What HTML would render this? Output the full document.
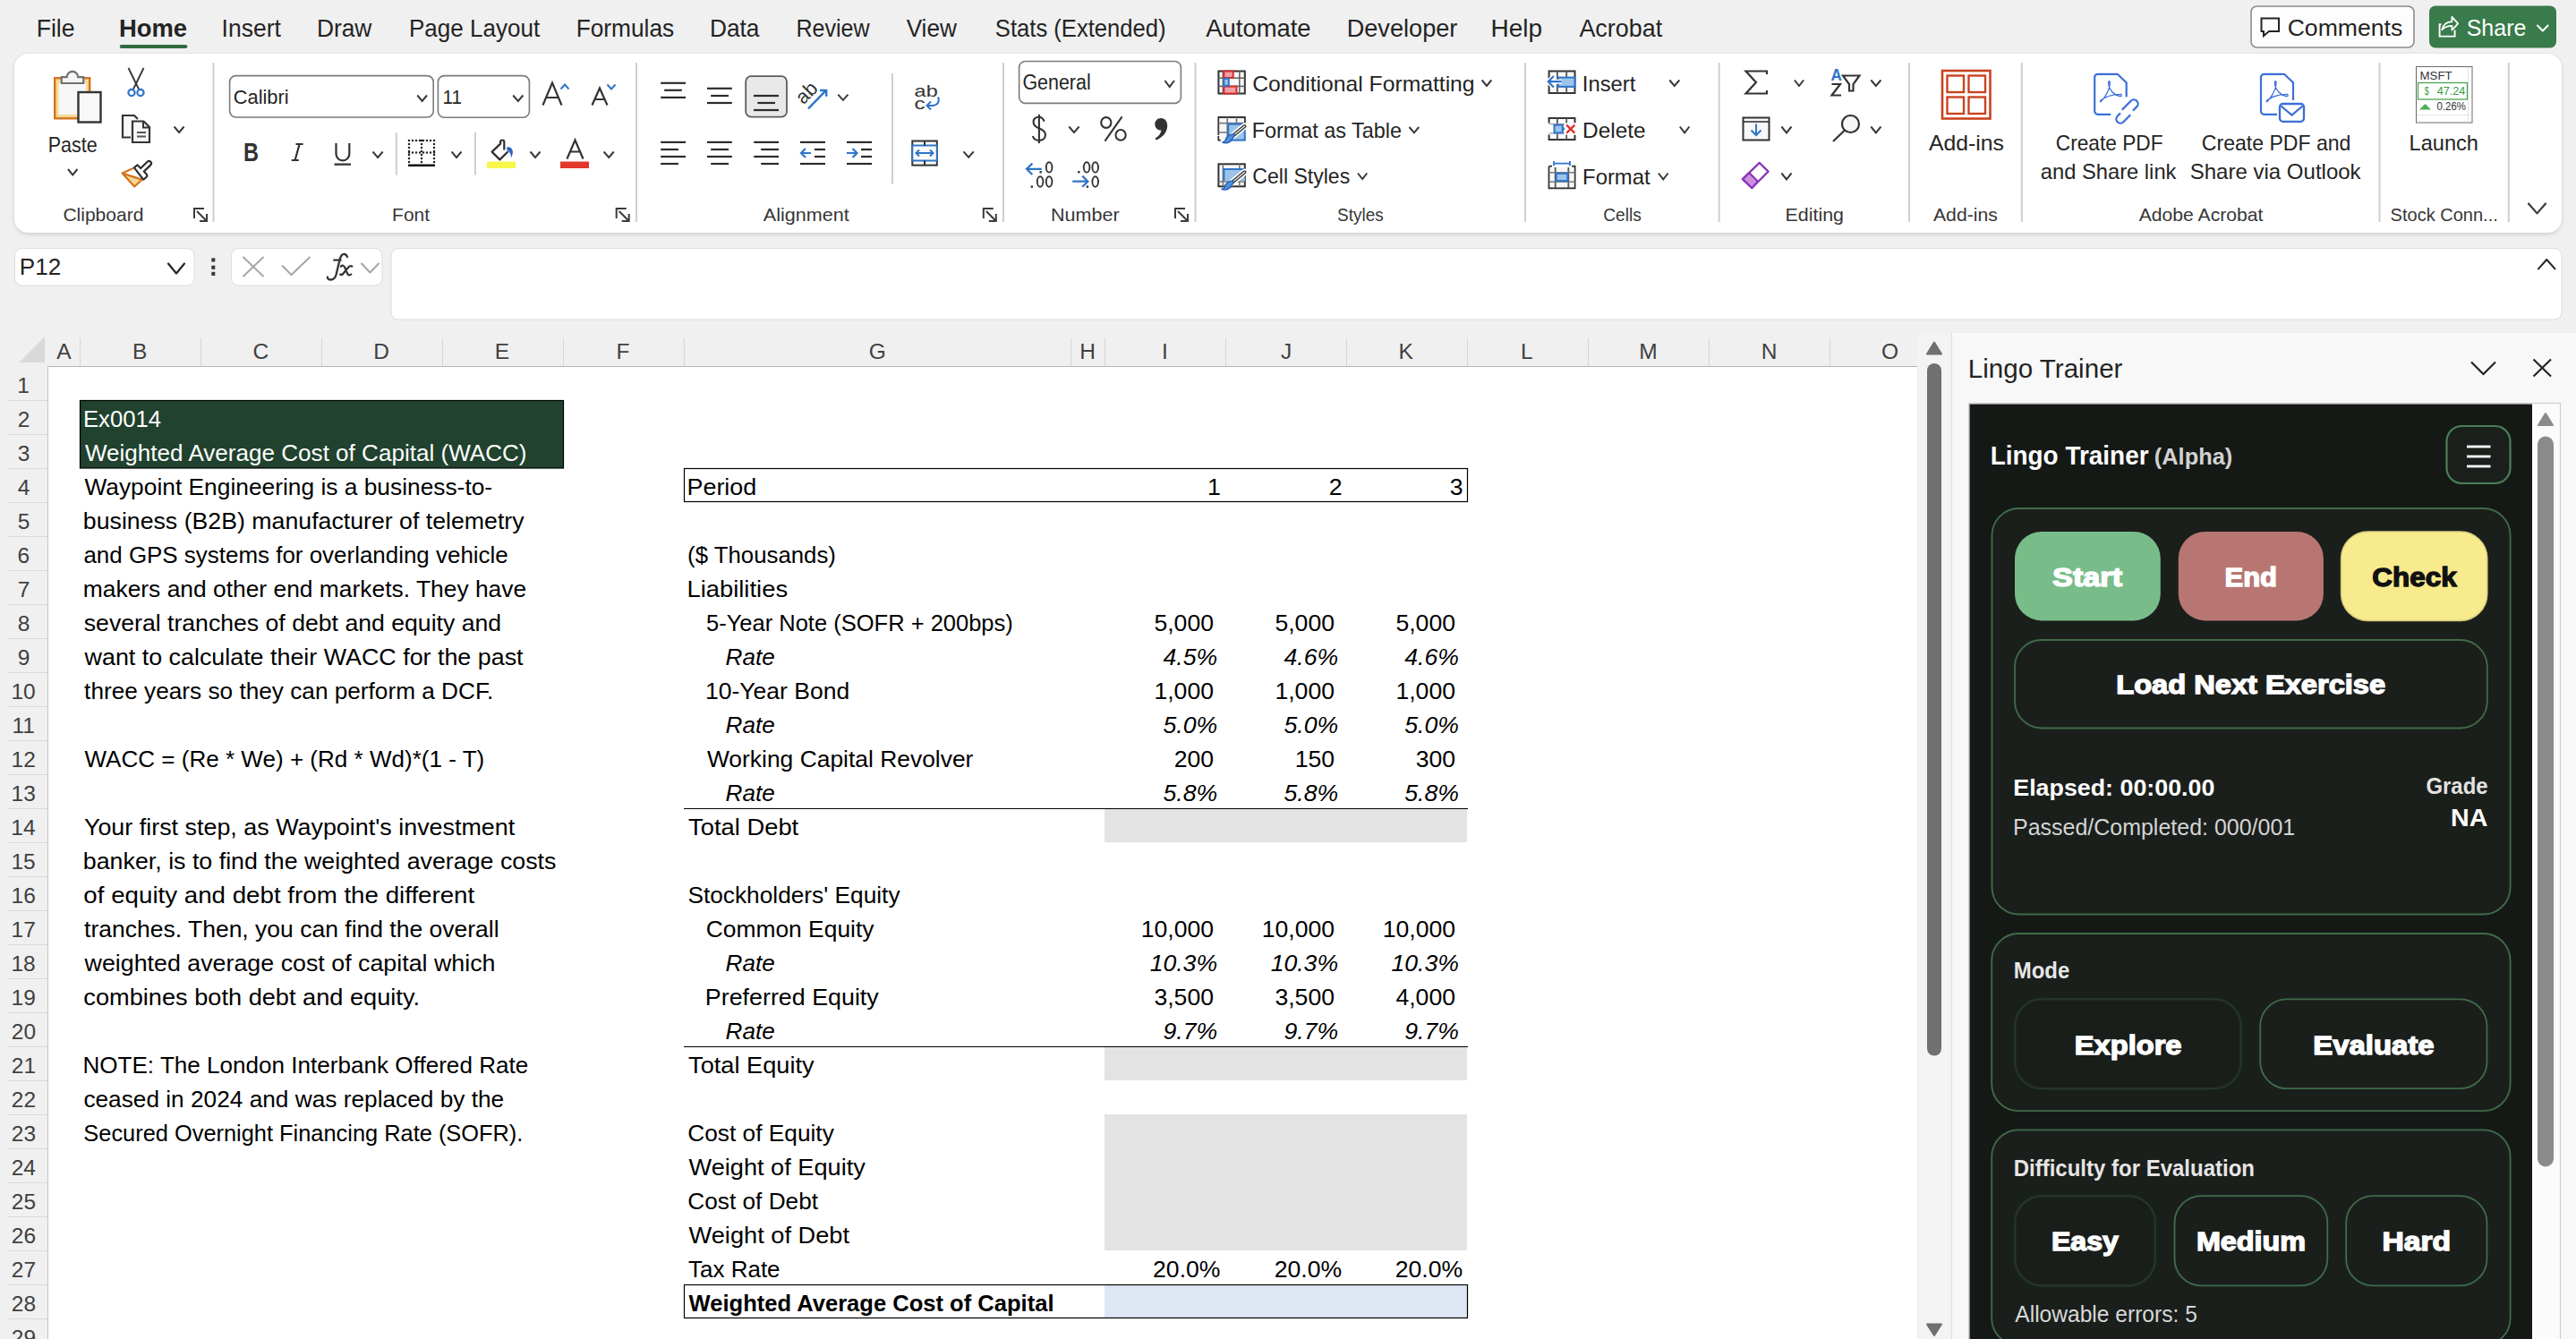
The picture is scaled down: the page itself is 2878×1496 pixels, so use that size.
<!DOCTYPE html>
<html><head><meta charset="utf-8"><title>Excel - Lingo Trainer</title>
<style>html,body{margin:0;padding:0;background:#f0f0f0;overflow:hidden}svg{display:block;font-family:"Liberation Sans",sans-serif}</style></head>
<body><svg width="2878" height="1496" viewBox="0 0 2878 1496">
<rect x="0" y="0" width="2878" height="1496" rx="0" fill="#f0f0f0" stroke="none" stroke-width="1" />
<text x="40.67" y="40.70" font-size="28.00" fill="#242424" textLength="42.90" lengthAdjust="spacingAndGlyphs" >File</text>
<text x="133.02" y="40.70" font-size="28.00" font-weight="bold" fill="#242424" textLength="76.09" lengthAdjust="spacingAndGlyphs" >Home</text>
<text x="247.62" y="40.70" font-size="28.00" fill="#242424" textLength="66.24" lengthAdjust="spacingAndGlyphs" >Insert</text>
<text x="353.89" y="40.70" font-size="28.00" fill="#242424" textLength="61.50" lengthAdjust="spacingAndGlyphs" >Draw</text>
<text x="456.92" y="40.70" font-size="28.00" fill="#242424" textLength="146.24" lengthAdjust="spacingAndGlyphs" >Page Layout</text>
<text x="643.70" y="40.70" font-size="28.00" fill="#242424" textLength="109.52" lengthAdjust="spacingAndGlyphs" >Formulas</text>
<text x="792.89" y="40.70" font-size="28.00" fill="#242424" textLength="55.60" lengthAdjust="spacingAndGlyphs" >Data</text>
<text x="889.39" y="40.70" font-size="28.00" fill="#242424" textLength="82.22" lengthAdjust="spacingAndGlyphs" >Review</text>
<text x="1012.63" y="40.70" font-size="28.00" fill="#242424" textLength="56.29" lengthAdjust="spacingAndGlyphs" >View</text>
<text x="1111.85" y="40.70" font-size="28.00" fill="#242424" textLength="190.71" lengthAdjust="spacingAndGlyphs" >Stats (Extended)</text>
<text x="1347.30" y="40.70" font-size="28.00" fill="#242424" textLength="117.28" lengthAdjust="spacingAndGlyphs" >Automate</text>
<text x="1504.63" y="40.70" font-size="28.00" fill="#242424" textLength="123.80" lengthAdjust="spacingAndGlyphs" >Developer</text>
<text x="1665.56" y="40.70" font-size="28.00" fill="#242424" textLength="57.61" lengthAdjust="spacingAndGlyphs" >Help</text>
<text x="1764.40" y="40.70" font-size="28.00" fill="#242424" textLength="92.77" lengthAdjust="spacingAndGlyphs" >Acrobat</text>
<rect x="133.7" y="50" width="75.70000000000002" height="4" rx="2" fill="#2f6b3f" stroke="none" stroke-width="1" />
<rect x="2515" y="7" width="182" height="46" rx="6.5" fill="#fdfdfd" stroke="#8c8c8c" stroke-width="1.6" />
<path d="M2526.5,20.5 H2546 V35 H2535 L2529,40 V35 H2526.5 Z" fill="none" stroke="#242424" stroke-width="2" stroke-linejoin="miter"/>
<text x="2555.67" y="39.60" font-size="26.60" fill="#242424" textLength="128.65" lengthAdjust="spacingAndGlyphs" >Comments</text>
<rect x="2714" y="6.5" width="142" height="47.0" rx="7" fill="#3a7b4c" stroke="none" stroke-width="1" />
<path d="M2727.5,27.2 H2725.6 V40.6 H2742.6 V33.5" fill="none" stroke="#fff" stroke-width="1.9"/>
<path d="M2728.4,33.2 C2729.6,27.6 2733.2,24.6 2739.4,24.2 V18.8 L2746.2,26.3 L2739.4,33.6 V28.8 C2734.2,28.8 2730.8,30.4 2728.4,33.2 Z" fill="none" stroke="#fff" stroke-width="1.8" stroke-linejoin="round"/>
<text x="2755.67" y="39.60" font-size="26.60" fill="#fff" textLength="66.82" lengthAdjust="spacingAndGlyphs" >Share</text>
<polyline points="2835,28.5 2840.8,34.5 2846.6,28.5" fill="none" stroke="#fff" stroke-width="2" stroke-linecap="round" stroke-linejoin="round"/>
<defs><filter id="sh" x="-5%" y="-20%" width="110%" height="150%"><feDropShadow dx="0" dy="1.5" stdDeviation="2" flood-color="#000" flood-opacity="0.16"/></filter><filter id="sh2" x="-20%" y="-20%" width="140%" height="140%"><feDropShadow dx="0" dy="0" stdDeviation="6" flood-color="#000" flood-opacity="0.5"/></filter></defs>
<rect x="16" y="60" width="2846" height="200" rx="16" fill="#ffffff" stroke="none" stroke-width="1" filter="url(#sh)"/>
<line x1="238.5" y1="70" x2="238.5" y2="248" stroke="#cfcfcf" stroke-width="2" stroke-linecap="butt"/>
<line x1="711" y1="70" x2="711" y2="248" stroke="#cfcfcf" stroke-width="2" stroke-linecap="butt"/>
<line x1="1121" y1="70" x2="1121" y2="248" stroke="#cfcfcf" stroke-width="2" stroke-linecap="butt"/>
<line x1="1335.5" y1="70" x2="1335.5" y2="248" stroke="#cfcfcf" stroke-width="2" stroke-linecap="butt"/>
<line x1="1704" y1="70" x2="1704" y2="248" stroke="#cfcfcf" stroke-width="2" stroke-linecap="butt"/>
<line x1="1920.7" y1="70" x2="1920.7" y2="248" stroke="#cfcfcf" stroke-width="2" stroke-linecap="butt"/>
<line x1="2133" y1="70" x2="2133" y2="248" stroke="#cfcfcf" stroke-width="2" stroke-linecap="butt"/>
<line x1="2258.8" y1="70" x2="2258.8" y2="248" stroke="#cfcfcf" stroke-width="2" stroke-linecap="butt"/>
<line x1="2658.5" y1="70" x2="2658.5" y2="248" stroke="#cfcfcf" stroke-width="2" stroke-linecap="butt"/>
<line x1="2802.8" y1="70" x2="2802.8" y2="248" stroke="#cfcfcf" stroke-width="2" stroke-linecap="butt"/>
<line x1="442.8" y1="148" x2="442.8" y2="195.5" stroke="#cfcfcf" stroke-width="2" stroke-linecap="butt"/>
<line x1="531" y1="148" x2="531" y2="195.5" stroke="#cfcfcf" stroke-width="2" stroke-linecap="butt"/>
<line x1="997" y1="82" x2="997" y2="205.5" stroke="#cfcfcf" stroke-width="2" stroke-linecap="butt"/>
<text x="70.45" y="246.60" font-size="21.00" fill="#363636" textLength="89.87" lengthAdjust="spacingAndGlyphs" >Clipboard</text>
<text x="438.12" y="246.60" font-size="21.00" fill="#363636" textLength="42.01" lengthAdjust="spacingAndGlyphs" >Font</text>
<text x="852.80" y="246.60" font-size="21.00" fill="#363636" textLength="95.90" lengthAdjust="spacingAndGlyphs" >Alignment</text>
<text x="1174.08" y="246.60" font-size="21.00" fill="#363636" textLength="76.58" lengthAdjust="spacingAndGlyphs" >Number</text>
<text x="1494.05" y="246.60" font-size="21.00" fill="#363636" textLength="51.63" lengthAdjust="spacingAndGlyphs" >Styles</text>
<text x="1791.24" y="246.60" font-size="21.00" fill="#363636" textLength="42.63" lengthAdjust="spacingAndGlyphs" >Cells</text>
<text x="1994.59" y="246.60" font-size="21.00" fill="#363636" textLength="65.46" lengthAdjust="spacingAndGlyphs" >Editing</text>
<text x="2160.00" y="246.60" font-size="21.00" fill="#363636" textLength="71.76" lengthAdjust="spacingAndGlyphs" >Add-ins</text>
<text x="2389.70" y="246.60" font-size="21.00" fill="#363636" textLength="138.72" lengthAdjust="spacingAndGlyphs" >Adobe Acrobat</text>
<text x="2670.60" y="246.60" font-size="21.00" fill="#363636" textLength="120.22" lengthAdjust="spacingAndGlyphs" >Stock Conn...</text>
<path d="M217,244 V233 H228" fill="none" stroke="#3b3b3b" stroke-width="2"/><path d="M220,236 L231,247 M223,247 H231 V239" fill="none" stroke="#3b3b3b" stroke-width="2"/>
<path d="M688.7,244 V233 H699.7" fill="none" stroke="#3b3b3b" stroke-width="2"/><path d="M691.7,236 L702.7,247 M694.7,247 H702.7 V239" fill="none" stroke="#3b3b3b" stroke-width="2"/>
<path d="M1098.8,244 V233 H1109.8" fill="none" stroke="#3b3b3b" stroke-width="2"/><path d="M1101.8,236 L1112.8,247 M1104.8,247 H1112.8 V239" fill="none" stroke="#3b3b3b" stroke-width="2"/>
<path d="M1313,244 V233 H1324" fill="none" stroke="#3b3b3b" stroke-width="2"/><path d="M1316,236 L1327,247 M1319,247 H1327 V239" fill="none" stroke="#3b3b3b" stroke-width="2"/>
<polyline points="2825,227.5 2834.5,238.4 2844,227.5" fill="none" stroke="#3b3b3b" stroke-width="2.2" stroke-linecap="round" stroke-linejoin="round"/>
<rect x="61.2" y="87.2" width="39.0" height="45.10000000000001" rx="0" fill="#f6d995" stroke="#d4731f" stroke-width="2.4" />
<rect x="65.5" y="93" width="30.5" height="35" rx="0" fill="#f7f7f9" stroke="none" stroke-width="1" />
<path d="M68.8,93 V86.2 H74.6 A6.3,6.3 0 0 1 87.2,86.2 H93.2 V93 Z" fill="#f4f4f4" stroke="#707070" stroke-width="2.2" />
<rect x="87.5" y="103" width="25.0" height="33.5" rx="0" fill="#f8f8fa" stroke="#333" stroke-width="2.4" />
<text x="53.78" y="170.00" font-size="24.00" fill="#242424" textLength="54.98" lengthAdjust="spacingAndGlyphs" >Paste</text>
<polyline points="76,189 81.25,195.5 86.5,189" fill="none" stroke="#383838" stroke-width="2" stroke-linecap="butt" stroke-linejoin="miter"/>
<line x1="143.5" y1="76" x2="155" y2="99.5" stroke="#333" stroke-width="1.8" stroke-linecap="butt"/>
<line x1="160.5" y1="76" x2="149" y2="99.5" stroke="#333" stroke-width="1.8" stroke-linecap="butt"/>
<circle cx="147" cy="103.5" r="3.6" fill="none" stroke="#2f74c8" stroke-width="2.2"/>
<circle cx="157" cy="103.5" r="3.6" fill="none" stroke="#2f74c8" stroke-width="2.2"/>
<path d="M146,153.5 H137 V129 H150 L154,133" fill="#f7f7f9" stroke="#333" stroke-width="2.2" />
<path d="M148,135.5 H160.5 L167,142 V159 H148 Z" fill="#f7f7f9" stroke="#333" stroke-width="2.2" />
<path d="M160,135.5 V142.5 H167" fill="none" stroke="#333" stroke-width="2" />
<rect x="153" y="147" width="10" height="2" rx="0" fill="#555" stroke="none" stroke-width="1" />
<rect x="153" y="151.5" width="10" height="2.0" rx="0" fill="#555" stroke="none" stroke-width="1" />
<polyline points="194.6,141.5 200.1,148 205.6,141.5" fill="none" stroke="#383838" stroke-width="2" stroke-linecap="butt" stroke-linejoin="miter"/>
<path d="M136.6,193.6 L150.2,208.4 L158.6,200.6 Z" fill="#f6d995" stroke="none" stroke-width="2" />
<path d="M150,187.5 Q143,190.5 136.6,193.6 L150.2,208.4 L159.8,199.8 M136.6,193.6 L158.6,200.6" fill="none" stroke="#d4731f" stroke-width="2.2" stroke-linejoin="round"/>
<path d="M150,187.3 L153.4,184.3 L157.2,188 L164.6,180.7 Q166.5,179 168.3,180.8 Q170,182.6 168.2,184.4 L160.8,191.6 L163.6,194.6 Q165,196.4 163.4,198 L160.2,200.6 Z" fill="#fff" stroke="#2e2e2e" stroke-width="2.2" stroke-linejoin="round"/>
<rect x="256.6" y="84.6" width="227.59999999999997" height="46.400000000000006" rx="7" fill="#fff" stroke="#7a7a7a" stroke-width="1.6" />
<text x="260.71" y="116.00" font-size="22.80" fill="#242424" textLength="61.95" lengthAdjust="spacingAndGlyphs" >Calibri</text>
<polyline points="466.3,106.5 471.65,113 477,106.5" fill="none" stroke="#383838" stroke-width="2" stroke-linecap="butt" stroke-linejoin="miter"/>
<rect x="489.4" y="84.6" width="102.0" height="46.70000000000002" rx="7" fill="#fff" stroke="#7a7a7a" stroke-width="1.6" />
<text x="494.44" y="116.00" font-size="22.80" fill="#242424" textLength="21.56" lengthAdjust="spacingAndGlyphs" >11</text>
<polyline points="573.2,106.5 578.8,113 584.4,106.5" fill="none" stroke="#383838" stroke-width="2" stroke-linecap="butt" stroke-linejoin="miter"/>
<path d="M606.5,117.5 L617,92.5 L627.5,117.5 M610.3,109 H623.7" fill="none" stroke="#333" stroke-width="2.2" />
<path d="M626.5,99.5 L631,94.5 L635.5,99.5" fill="none" stroke="#2f74c8" stroke-width="2" />
<path d="M661.5,117.5 L670,98.5 L678.5,117.5 M664.5,111 H675.5" fill="none" stroke="#333" stroke-width="2.2" />
<path d="M678.5,94.5 L683,99.5 L687.5,94.5" fill="none" stroke="#2f74c8" stroke-width="2" />
<text x="272.07" y="180.00" font-size="29.00" font-weight="bold" fill="#333" textLength="16.98" lengthAdjust="spacingAndGlyphs" >B</text>
<path d="M330.5,161 H338.6 M334.6,161 L329.6,179 M325.7,179 H333.8" fill="none" stroke="#333" stroke-width="2.2" />
<path d="M375.5,160 V172 A7.4,7.4 0 0 0 390.3,172 V160" fill="none" stroke="#333" stroke-width="2.2" />
<rect x="373.5" y="182.5" width="18.5" height="2.3000000000000114" rx="0" fill="#333" stroke="none" stroke-width="1" />
<polyline points="416.5,169.5 422.1,176 427.7,169.5" fill="none" stroke="#383838" stroke-width="2" stroke-linecap="butt" stroke-linejoin="miter"/>
<rect x="455.9" y="163.9" width="2.2000000000000455" height="2.1999999999999886" rx="0" fill="#222" stroke="none" stroke-width="1" />
<rect x="483.9" y="155.9" width="2.2000000000000455" height="2.1999999999999886" rx="0" fill="#222" stroke="none" stroke-width="1" />
<rect x="469.9" y="159.9" width="2.2000000000000455" height="2.1999999999999886" rx="0" fill="#222" stroke="none" stroke-width="1" />
<rect x="469.9" y="171.9" width="2.2000000000000455" height="2.1999999999999886" rx="0" fill="#222" stroke="none" stroke-width="1" />
<rect x="455.9" y="175.9" width="2.2000000000000455" height="2.1999999999999886" rx="0" fill="#222" stroke="none" stroke-width="1" />
<rect x="483.9" y="167.9" width="2.2000000000000455" height="2.1999999999999886" rx="0" fill="#222" stroke="none" stroke-width="1" />
<rect x="471.9" y="169.4" width="2.2000000000000455" height="2.1999999999999886" rx="0" fill="#222" stroke="none" stroke-width="1" />
<rect x="467.9" y="155.9" width="2.2000000000000455" height="2.1999999999999886" rx="0" fill="#222" stroke="none" stroke-width="1" />
<rect x="475.9" y="169.4" width="2.2000000000000455" height="2.1999999999999886" rx="0" fill="#222" stroke="none" stroke-width="1" />
<rect x="483.9" y="179.9" width="2.2000000000000455" height="2.1999999999999886" rx="0" fill="#222" stroke="none" stroke-width="1" />
<rect x="455.9" y="159.9" width="2.2000000000000455" height="2.1999999999999886" rx="0" fill="#222" stroke="none" stroke-width="1" />
<rect x="469.9" y="155.9" width="2.2000000000000455" height="2.1999999999999886" rx="0" fill="#222" stroke="none" stroke-width="1" />
<rect x="471.9" y="155.9" width="2.2000000000000455" height="2.1999999999999886" rx="0" fill="#222" stroke="none" stroke-width="1" />
<rect x="455.9" y="171.9" width="2.2000000000000455" height="2.1999999999999886" rx="0" fill="#222" stroke="none" stroke-width="1" />
<rect x="455.9" y="169.4" width="2.2000000000000455" height="2.1999999999999886" rx="0" fill="#222" stroke="none" stroke-width="1" />
<rect x="469.9" y="167.9" width="2.2000000000000455" height="2.1999999999999886" rx="0" fill="#222" stroke="none" stroke-width="1" />
<rect x="483.9" y="163.9" width="2.2000000000000455" height="2.1999999999999886" rx="0" fill="#222" stroke="none" stroke-width="1" />
<rect x="479.9" y="169.4" width="2.2000000000000455" height="2.1999999999999886" rx="0" fill="#222" stroke="none" stroke-width="1" />
<rect x="475.9" y="155.9" width="2.2000000000000455" height="2.1999999999999886" rx="0" fill="#222" stroke="none" stroke-width="1" />
<rect x="469.9" y="179.9" width="2.2000000000000455" height="2.1999999999999886" rx="0" fill="#222" stroke="none" stroke-width="1" />
<rect x="483.9" y="175.9" width="2.2000000000000455" height="2.1999999999999886" rx="0" fill="#222" stroke="none" stroke-width="1" />
<rect x="459.9" y="169.4" width="2.2000000000000455" height="2.1999999999999886" rx="0" fill="#222" stroke="none" stroke-width="1" />
<rect x="455.9" y="155.9" width="2.2000000000000455" height="2.1999999999999886" rx="0" fill="#222" stroke="none" stroke-width="1" />
<rect x="479.9" y="155.9" width="2.2000000000000455" height="2.1999999999999886" rx="0" fill="#222" stroke="none" stroke-width="1" />
<rect x="463.9" y="169.4" width="2.2000000000000455" height="2.1999999999999886" rx="0" fill="#222" stroke="none" stroke-width="1" />
<rect x="455.9" y="167.9" width="2.2000000000000455" height="2.1999999999999886" rx="0" fill="#222" stroke="none" stroke-width="1" />
<rect x="469.9" y="163.9" width="2.2000000000000455" height="2.1999999999999886" rx="0" fill="#222" stroke="none" stroke-width="1" />
<rect x="483.9" y="159.9" width="2.2000000000000455" height="2.1999999999999886" rx="0" fill="#222" stroke="none" stroke-width="1" />
<rect x="455.9" y="179.9" width="2.2000000000000455" height="2.1999999999999886" rx="0" fill="#222" stroke="none" stroke-width="1" />
<rect x="483.9" y="169.4" width="2.2000000000000455" height="2.1999999999999886" rx="0" fill="#222" stroke="none" stroke-width="1" />
<rect x="469.9" y="175.9" width="2.2000000000000455" height="2.1999999999999886" rx="0" fill="#222" stroke="none" stroke-width="1" />
<rect x="483.9" y="171.9" width="2.2000000000000455" height="2.1999999999999886" rx="0" fill="#222" stroke="none" stroke-width="1" />
<rect x="459.9" y="155.9" width="2.2000000000000455" height="2.1999999999999886" rx="0" fill="#222" stroke="none" stroke-width="1" />
<rect x="467.9" y="169.4" width="2.2000000000000455" height="2.1999999999999886" rx="0" fill="#222" stroke="none" stroke-width="1" />
<rect x="463.9" y="155.9" width="2.2000000000000455" height="2.1999999999999886" rx="0" fill="#222" stroke="none" stroke-width="1" />
<rect x="456" y="183.5" width="30" height="2.5" rx="0" fill="#111" stroke="none" stroke-width="1" />
<polyline points="504.6,169.5 510.05,176 515.5,169.5" fill="none" stroke="#383838" stroke-width="2" stroke-linecap="butt" stroke-linejoin="miter"/>
<path d="M563.3,167.6 V158.6 A2.1,2.1 0 0 0 559.1,158.6 V160.6 L549.6,169.6 L558.4,178.4 L567.6,169.2" fill="none" stroke="#2e2e2e" stroke-width="2.2" stroke-linejoin="round"/>
<path d="M566.2,164.6 C570.5,163.2 573.6,167 572.8,171.5 L571.3,176.2 C570.6,172 569.3,169.3 566.4,167.8 Z" fill="#2a66c0" stroke="none" stroke-width="2" />
<rect x="544" y="180.5" width="32" height="7.5" rx="0" fill="#f7f74a" stroke="none" stroke-width="1" />
<polyline points="592.5,169.5 598.0,176 603.5,169.5" fill="none" stroke="#383838" stroke-width="2" stroke-linecap="butt" stroke-linejoin="miter"/>
<path d="M633.5,177.5 L642.5,156.5 L651.5,177.5 M637,169.5 H648" fill="none" stroke="#333" stroke-width="2.2" />
<rect x="626" y="180.5" width="32" height="7.5" rx="0" fill="#e4372b" stroke="none" stroke-width="1" />
<polyline points="674.6,169.5 680.2,176 685.8,169.5" fill="none" stroke="#383838" stroke-width="2" stroke-linecap="butt" stroke-linejoin="miter"/>
<rect x="738.2" y="91.7" width="27.799999999999955" height="2.1999999999999886" rx="0" fill="#2b2b2b" stroke="none" stroke-width="1" />
<rect x="742.2" y="99.7" width="19.59999999999991" height="2.1999999999999886" rx="0" fill="#2b2b2b" stroke="none" stroke-width="1" />
<rect x="738.2" y="107.80000000000001" width="27.799999999999955" height="2.1999999999999886" rx="0" fill="#2b2b2b" stroke="none" stroke-width="1" />
<rect x="790" y="97.7" width="27.799999999999955" height="2.1999999999999886" rx="0" fill="#2b2b2b" stroke="none" stroke-width="1" />
<rect x="794.2" y="105.9" width="19.799999999999955" height="2.1999999999999886" rx="0" fill="#2b2b2b" stroke="none" stroke-width="1" />
<rect x="790" y="113.9" width="27.799999999999955" height="2.1999999999999886" rx="0" fill="#2b2b2b" stroke="none" stroke-width="1" />
<rect x="833.2" y="85.2" width="45.799999999999955" height="45.499999999999986" rx="6" fill="#e8e8e8" stroke="#5c5c5c" stroke-width="1.8" />
<rect x="842" y="105.9" width="28" height="2.1999999999999886" rx="0" fill="#2b2b2b" stroke="none" stroke-width="1" />
<rect x="846.3" y="113.9" width="19.700000000000045" height="2.1999999999999886" rx="0" fill="#2b2b2b" stroke="none" stroke-width="1" />
<rect x="842" y="121.9" width="28" height="2.1999999999999886" rx="0" fill="#2b2b2b" stroke="none" stroke-width="1" />
<text x="0" y="0" font-size="22" fill="#333" transform="translate(897.5,117.5) rotate(-45)">ab</text>
<path d="M903,121.3 L922,101.8" fill="none" stroke="#2f74c8" stroke-width="2.4" />
<path d="M916,101 H923.2 V107.8" fill="none" stroke="#2f74c8" stroke-width="2.4" />
<polyline points="936.3,105.6 941.9,111.8 947.5,105.6" fill="none" stroke="#383838" stroke-width="2" stroke-linecap="butt" stroke-linejoin="miter"/>
<rect x="738.2" y="157.8" width="27.799999999999955" height="2.1999999999999886" rx="0" fill="#2b2b2b" stroke="none" stroke-width="1" />
<rect x="738.2" y="165.9" width="19.699999999999932" height="2.1999999999999886" rx="0" fill="#2b2b2b" stroke="none" stroke-width="1" />
<rect x="738.2" y="173.9" width="27.799999999999955" height="2.1999999999999886" rx="0" fill="#2b2b2b" stroke="none" stroke-width="1" />
<rect x="738.2" y="181.9" width="19.699999999999932" height="2.1999999999999886" rx="0" fill="#2b2b2b" stroke="none" stroke-width="1" />
<rect x="790" y="157.8" width="27.799999999999955" height="2.1999999999999886" rx="0" fill="#2b2b2b" stroke="none" stroke-width="1" />
<rect x="794.2" y="165.9" width="19.799999999999955" height="2.1999999999999886" rx="0" fill="#2b2b2b" stroke="none" stroke-width="1" />
<rect x="790" y="173.9" width="27.799999999999955" height="2.1999999999999886" rx="0" fill="#2b2b2b" stroke="none" stroke-width="1" />
<rect x="794.2" y="181.9" width="19.799999999999955" height="2.1999999999999886" rx="0" fill="#2b2b2b" stroke="none" stroke-width="1" />
<rect x="842.2" y="157.8" width="27.799999999999955" height="2.1999999999999886" rx="0" fill="#2b2b2b" stroke="none" stroke-width="1" />
<rect x="850.2" y="165.9" width="19.799999999999955" height="2.1999999999999886" rx="0" fill="#2b2b2b" stroke="none" stroke-width="1" />
<rect x="842.2" y="173.9" width="27.799999999999955" height="2.1999999999999886" rx="0" fill="#2b2b2b" stroke="none" stroke-width="1" />
<rect x="850.2" y="181.9" width="19.799999999999955" height="2.1999999999999886" rx="0" fill="#2b2b2b" stroke="none" stroke-width="1" />
<rect x="894" y="157.8" width="28" height="2.1999999999999886" rx="0" fill="#2b2b2b" stroke="none" stroke-width="1" />
<rect x="910" y="165.9" width="12" height="2.1999999999999886" rx="0" fill="#2b2b2b" stroke="none" stroke-width="1" />
<rect x="910" y="173.9" width="12" height="2.1999999999999886" rx="0" fill="#2b2b2b" stroke="none" stroke-width="1" />
<rect x="894" y="181.9" width="28" height="2.1999999999999886" rx="0" fill="#2b2b2b" stroke="none" stroke-width="1" />
<rect x="946" y="157.8" width="28" height="2.1999999999999886" rx="0" fill="#2b2b2b" stroke="none" stroke-width="1" />
<rect x="962" y="165.9" width="12" height="2.1999999999999886" rx="0" fill="#2b2b2b" stroke="none" stroke-width="1" />
<rect x="962" y="173.9" width="12" height="2.1999999999999886" rx="0" fill="#2b2b2b" stroke="none" stroke-width="1" />
<rect x="946" y="181.9" width="28" height="2.1999999999999886" rx="0" fill="#2b2b2b" stroke="none" stroke-width="1" />
<path d="M895,171 H906 M900,166 L895,171 L900,176" fill="none" stroke="#2f74c8" stroke-width="2.2" />
<path d="M946,171 H957.5 M952.5,166 L957.5,171 L952.5,176" fill="none" stroke="#2f74c8" stroke-width="2.2" />
<text x="1021.60" y="107.60" font-size="17.50" fill="#333" textLength="26.09" lengthAdjust="spacingAndGlyphs" >ab</text>
<text x="1021.58" y="121.80" font-size="17.50" fill="#333" textLength="12.02" lengthAdjust="spacingAndGlyphs" >c</text>
<path d="M1048,108.5 C1050,113 1048,117.5 1042,118 H1036 M1040,113.5 L1035.5,118 L1040,122.5" fill="none" stroke="#2f74c8" stroke-width="2" />
<rect x="1019.3" y="157.5" width="27.5" height="27.099999999999994" rx="0" fill="#fafafa" stroke="#333" stroke-width="2" />
<rect x="1019.3" y="162.5" width="27.5" height="17.0" rx="0" fill="#fafafa" stroke="#2f74c8" stroke-width="2" />
<line x1="1033" y1="157.5" x2="1033" y2="162.5" stroke="#333" stroke-width="2" stroke-linecap="butt"/>
<line x1="1033" y1="179.5" x2="1033" y2="184.6" stroke="#333" stroke-width="2" stroke-linecap="butt"/>
<path d="M1023.5,171 H1042.5 M1027,167.5 L1023.5,171 L1027,174.5 M1039,167.5 L1042.5,171 L1039,174.5" fill="none" stroke="#2f74c8" stroke-width="2" />
<polyline points="1076.5,169.3 1082.15,175.7 1087.8,169.3" fill="none" stroke="#383838" stroke-width="2" stroke-linecap="butt" stroke-linejoin="miter"/>
<rect x="1138.6" y="68.5" width="180.80000000000018" height="46.900000000000006" rx="7" fill="#fff" stroke="#7a7a7a" stroke-width="1.6" />
<text x="1142.43" y="99.80" font-size="23.50" fill="#242424" textLength="76.27" lengthAdjust="spacingAndGlyphs" >General</text>
<polyline points="1301.4,90 1306.7,97 1312,90" fill="none" stroke="#383838" stroke-width="2" stroke-linecap="butt" stroke-linejoin="miter"/>
<path d="M1166.6,135.8 C1165.6,132.6 1163.2,130.8 1160.6,130.8 C1156.8,130.8 1154.6,133.2 1154.6,136.6 C1154.6,140.6 1157.6,142.2 1161,143.4 C1165,144.8 1168,146.6 1168,150.6 C1168,154.6 1165,156.9 1161,156.9 C1157.4,156.9 1154.8,155 1153.8,152" fill="none" stroke="#333" stroke-width="2.1" />
<line x1="1160.9" y1="127.8" x2="1160.9" y2="160.1" stroke="#333" stroke-width="2.1" stroke-linecap="butt"/>
<polyline points="1194.3,141.5 1199.9499999999998,148 1205.6,141.5" fill="none" stroke="#383838" stroke-width="2" stroke-linecap="butt" stroke-linejoin="miter"/>
<ellipse cx="1235.8" cy="137" rx="5.6" ry="5.9" fill="none" stroke="#333" stroke-width="2.1"/>
<ellipse cx="1252.1" cy="150.9" rx="5.6" ry="5.9" fill="none" stroke="#333" stroke-width="2.1"/>
<line x1="1234.4" y1="157.6" x2="1253.6" y2="130.3" stroke="#333" stroke-width="2.1" stroke-linecap="butt"/>
<path d="M1297,132 C1301.5,132 1304.2,135.5 1304.2,140.5 C1304.2,148 1298.5,154 1291.4,156.6 L1290.6,154.6 C1294.5,152.6 1296.8,149.4 1297.4,145.6 C1293.2,145.8 1290.3,142.8 1290.3,138.8 C1290.3,134.8 1293.3,132 1297,132 Z" fill="#333" stroke="none" stroke-width="2" />
<ellipse cx="1172.1" cy="186.9" rx="3.3" ry="5.7" fill="none" stroke="#333" stroke-width="1.9"/>
<rect x="1161.5" y="191.0" width="2.4" height="2.4" fill="#333"/>
<rect x="1151.6" y="207.4" width="2.4" height="2.4" fill="#333"/>
<ellipse cx="1162.1" cy="203" rx="3.3" ry="5.7" fill="none" stroke="#333" stroke-width="1.9"/>
<ellipse cx="1172.1" cy="203" rx="3.3" ry="5.7" fill="none" stroke="#333" stroke-width="1.9"/>
<path d="M1147,188.8 H1163.8 M1153.4,182.6 L1147,188.8 L1153.4,195" fill="none" stroke="#2f74c8" stroke-width="2.2" />
<rect x="1204.1" y="191.0" width="2.4" height="2.4" fill="#333"/>
<ellipse cx="1214.1" cy="186.9" rx="3.3" ry="5.7" fill="none" stroke="#333" stroke-width="1.9"/>
<ellipse cx="1223.7" cy="186.9" rx="3.3" ry="5.7" fill="none" stroke="#333" stroke-width="1.9"/>
<rect x="1213.7" y="207.4" width="2.4" height="2.4" fill="#333"/>
<ellipse cx="1223.7" cy="203" rx="3.3" ry="5.7" fill="none" stroke="#333" stroke-width="1.9"/>
<path d="M1198.2,202.7 H1215 M1209.2,196.6 L1215.4,202.7 L1209.2,208.8" fill="none" stroke="#2f74c8" stroke-width="2.2" />
<rect x="1361.4" y="79.5" width="29.399999999999864" height="25.0" rx="0" fill="#f7f7f7" stroke="#333" stroke-width="2" />
<line x1="1366.4" y1="79.5" x2="1366.4" y2="104.5" stroke="#666" stroke-width="1.6" stroke-linecap="butt"/>
<line x1="1384.8" y1="79.5" x2="1384.8" y2="104.5" stroke="#666" stroke-width="1.6" stroke-linecap="butt"/>
<line x1="1361.4" y1="87.2" x2="1390.8" y2="87.2" stroke="#666" stroke-width="1.6" stroke-linecap="butt"/>
<line x1="1361.4" y1="96.4" x2="1390.8" y2="96.4" stroke="#666" stroke-width="1.6" stroke-linecap="butt"/>
<rect x="1367.4" y="79.5" width="10.299999999999955" height="7.5" rx="0" fill="#f0a0a4" stroke="#d42b2b" stroke-width="2" />
<rect x="1367.4" y="96.6" width="14.099999999999909" height="7.900000000000006" rx="0" fill="#f0a0a4" stroke="#d42b2b" stroke-width="2" />
<rect x="1367.4" y="87.8" width="5.399999999999864" height="8.0" rx="0" fill="#9cc3e8" stroke="#2f74c8" stroke-width="2" />
<text x="1399.27" y="101.60" font-size="24.00" fill="#242424" textLength="248.30" lengthAdjust="spacingAndGlyphs" >Conditional Formatting</text>
<polyline points="1655.7,89.5 1661.0,96 1666.3,89.5" fill="none" stroke="#383838" stroke-width="2" stroke-linecap="butt" stroke-linejoin="miter"/>
<path d="M1361.4,151 V131 H1390.8 V138" fill="none" stroke="#333" stroke-width="2" /><path d="M1361.4,152 V156.5 H1364" fill="none" stroke="#333" stroke-width="2" /><rect x="1362.4" y="132" width="27.59999999999991" height="24" rx="0" fill="#f7f7f7" stroke="none" stroke-width="1" /><line x1="1371.2" y1="131" x2="1371.2" y2="157" stroke="#777" stroke-width="1.6" stroke-linecap="butt"/><line x1="1381.5" y1="131" x2="1381.5" y2="157" stroke="#777" stroke-width="1.6" stroke-linecap="butt"/><line x1="1361.4" y1="137.6" x2="1391" y2="137.6" stroke="#777" stroke-width="1.6" stroke-linecap="butt"/><line x1="1361.4" y1="147.9" x2="1391" y2="147.9" stroke="#777" stroke-width="1.6" stroke-linecap="butt"/><rect x="1372.2" y="138.6" width="18.59999999999991" height="18.0" rx="0" fill="#9cc3e8" stroke="#2f74c8" stroke-width="2" /><line x1="1390.5" y1="141" x2="1377" y2="152" stroke="#fff" stroke-width="7" stroke-linecap="round"/><line x1="1390.5" y1="141" x2="1377" y2="152" stroke="#333" stroke-width="4" stroke-linecap="round"/><line x1="1390.5" y1="141" x2="1377" y2="152" stroke="#f2f2f2" stroke-width="1.3" stroke-linecap="round"/><path d="M1379,150 C1374,149 1370,153 1369,157 C1368,158.5 1367,159 1365.5,159 C1371,161 1377,159 1379,150 Z" fill="#4f8fdc" stroke="#2a62b8" stroke-width="1.4" />
<text x="1398.63" y="153.50" font-size="24.00" fill="#242424" textLength="167.41" lengthAdjust="spacingAndGlyphs" >Format as Table</text>
<polyline points="1574.5,142 1579.85,148.3 1585.2,142" fill="none" stroke="#383838" stroke-width="2" stroke-linecap="butt" stroke-linejoin="miter"/>
<rect x="1361.4" y="183.3" width="29.399999999999864" height="25.0" rx="0" fill="#f7f7f7" stroke="#333" stroke-width="2" /><line x1="1366.4" y1="183.3" x2="1366.4" y2="208.3" stroke="#777" stroke-width="1.6" stroke-linecap="butt"/><line x1="1384.8" y1="183.3" x2="1384.8" y2="208.3" stroke="#777" stroke-width="1.6" stroke-linecap="butt"/><line x1="1361.4" y1="202.9" x2="1390.8" y2="202.9" stroke="#777" stroke-width="1.6" stroke-linecap="butt"/><path d="M1367.4,202.3 V188.9 H1390.8 V202.3 Z" fill="#9cc3e8" stroke="none" stroke-width="2" /><path d="M1367.4,202.3 V188.9 H1390.8" fill="none" stroke="#2f74c8" stroke-width="2" /><line x1="1390.5" y1="192.3" x2="1376" y2="204.3" stroke="#fff" stroke-width="7" stroke-linecap="round"/><line x1="1390.5" y1="192.3" x2="1376" y2="204.3" stroke="#333" stroke-width="4" stroke-linecap="round"/><line x1="1390.5" y1="192.3" x2="1376" y2="204.3" stroke="#f2f2f2" stroke-width="1.3" stroke-linecap="round"/><path d="M1378,202.3 C1373,201.3 1369,205.3 1368,209.3 C1367,210.8 1366,211.3 1364.5,211.3 C1370,213.3 1376,211.3 1378,202.3 Z" fill="#4f8fdc" stroke="#2a62b8" stroke-width="1.4" />
<text x="1399.35" y="205.00" font-size="24.00" fill="#242424" textLength="108.83" lengthAdjust="spacingAndGlyphs" >Cell Styles</text>
<polyline points="1517,193.5 1522.15,200 1527.3,193.5" fill="none" stroke="#383838" stroke-width="2" stroke-linecap="butt" stroke-linejoin="miter"/>
<rect x="1730.6" y="79.5" width="28.90000000000009" height="24.5" rx="0" fill="#f7f7f7" stroke="#333" stroke-width="2" />
<line x1="1739.9" y1="79.5" x2="1739.9" y2="104" stroke="#555" stroke-width="1.8" stroke-linecap="butt"/>
<line x1="1750.2" y1="79.5" x2="1750.2" y2="104" stroke="#555" stroke-width="1.8" stroke-linecap="butt"/>
<rect x="1740.9" y="86.6" width="18.59999999999991" height="10.300000000000011" rx="0" fill="#9cc3e8" stroke="#2f74c8" stroke-width="2" />
<path d="M1729.8,91.2 H1744.5 M1735.8,85 L1729.8,91.2 L1735.8,97.4" fill="none" stroke="#fff" stroke-width="5" />
<path d="M1729.8,91.2 H1744.5 M1735.8,85 L1729.8,91.2 L1735.8,97.4" fill="none" stroke="#2f74c8" stroke-width="2.2" />
<text x="1767.86" y="101.70" font-size="24.00" fill="#242424" textLength="59.48" lengthAdjust="spacingAndGlyphs" >Insert</text>
<polyline points="1865.3,89.5 1870.8,96 1876.3,89.5" fill="none" stroke="#383838" stroke-width="2" stroke-linecap="butt" stroke-linejoin="miter"/>
<path d="M1730.6,137.5 V132 H1759.5 V137.5 M1730.6,150.5 V156 H1759.5 V150.5" fill="none" stroke="#333" stroke-width="2" />
<line x1="1739.9" y1="132" x2="1739.9" y2="156" stroke="#555" stroke-width="1.8" stroke-linecap="butt"/>
<line x1="1750.2" y1="132" x2="1750.2" y2="156" stroke="#555" stroke-width="1.8" stroke-linecap="butt"/>
<line x1="1730.6" y1="138.6" x2="1759.5" y2="138.6" stroke="#999" stroke-width="1.2" stroke-linecap="butt"/>
<line x1="1730.6" y1="148.9" x2="1759.5" y2="148.9" stroke="#999" stroke-width="1.2" stroke-linecap="butt"/>
<rect x="1735.5" y="132.5" width="23.5" height="23.0" rx="0" fill="none" stroke="none" stroke-width="1" />
<rect x="1736.5" y="139.6" width="9.299999999999955" height="8.800000000000011" rx="0" fill="#9cc3e8" stroke="#2f74c8" stroke-width="2" />
<path d="M1746.5,141.5 L1749,144 L1746.5,146.5" fill="#2f74c8" stroke="none" stroke-width="2" />
<rect x="1748" y="137.5" width="12.5" height="13.0" rx="0" fill="#fff" stroke="none" stroke-width="1" />
<path d="M1750.2,139.6 L1759.3,148.6 M1759.3,139.6 L1750.2,148.6" fill="none" stroke="#e0322a" stroke-width="2.3" />
<text x="1768.05" y="153.80" font-size="24.00" fill="#242424" textLength="70.51" lengthAdjust="spacingAndGlyphs" >Delete</text>
<polyline points="1876.8,141.5 1882.1,148.3 1887.4,141.5" fill="none" stroke="#383838" stroke-width="2" stroke-linecap="butt" stroke-linejoin="miter"/>
<path d="M1730.6,189 V210.2 H1759.5 V189 M1730.6,185.7 H1734 M1756,185.7 H1759.5 V189 M1730.6,185.7 V189" fill="none" stroke="#333" stroke-width="2" />
<rect x="1731.6" y="186.7" width="26.90000000000009" height="22.5" rx="0" fill="#f7f7f7" stroke="none" stroke-width="1" />
<line x1="1737.7" y1="187" x2="1737.7" y2="210" stroke="#555" stroke-width="1.8" stroke-linecap="butt"/>
<line x1="1752.3" y1="187" x2="1752.3" y2="210" stroke="#555" stroke-width="1.8" stroke-linecap="butt"/>
<line x1="1730.6" y1="192.8" x2="1759.5" y2="192.8" stroke="#777" stroke-width="1.5" stroke-linecap="butt"/>
<line x1="1730.6" y1="203.1" x2="1759.5" y2="203.1" stroke="#777" stroke-width="1.5" stroke-linecap="butt"/>
<rect x="1738.7" y="193.8" width="12.599999999999909" height="8.299999999999983" rx="0" fill="#9cc3e8" stroke="#2f74c8" stroke-width="2" />
<path d="M1736,182.6 H1754 M1736,180 V185.2 M1754,180 V185.2" fill="none" stroke="#2f74c8" stroke-width="1.8" />
<text x="1768.09" y="205.90" font-size="24.00" fill="#242424" textLength="75.52" lengthAdjust="spacingAndGlyphs" >Format</text>
<polyline points="1852.9,193.5 1858.25,200.3 1863.6,193.5" fill="none" stroke="#383838" stroke-width="2" stroke-linecap="butt" stroke-linejoin="miter"/>
<path d="M1974,83 V79.5 H1950.5 L1962,92 L1950.5,104.5 H1974 V101" fill="none" stroke="#333" stroke-width="2.2" />
<polyline points="2004.9,89.5 2010.0,96 2015.1,89.5" fill="none" stroke="#383838" stroke-width="2" stroke-linecap="butt" stroke-linejoin="miter"/>
<text x="2045.57" y="89.50" font-size="18.00" font-weight="bold" fill="#2f74c8" textLength="12.35" lengthAdjust="spacingAndGlyphs" >A</text>
<path d="M2046.5,94 H2056 L2046.5,106.5 H2057" fill="none" stroke="#333" stroke-width="2.2" />
<path d="M2059,84.5 H2077.5 L2070.5,94 V101.5 H2066 V94 Z" fill="#fff" stroke="#333" stroke-width="2.2" />
<polyline points="2090.3,89.5 2095.8500000000004,96 2101.4,89.5" fill="none" stroke="#383838" stroke-width="2" stroke-linecap="butt" stroke-linejoin="miter"/>
<rect x="1947.5" y="131.5" width="29.0" height="25.0" rx="0" fill="#f7f7f7" stroke="#333" stroke-width="2" />
<line x1="1947.5" y1="136" x2="1976.5" y2="136" stroke="#333" stroke-width="1.6" stroke-linecap="butt"/>
<path d="M1962,138.5 V151 M1956.5,145.5 L1962,151 L1967.5,145.5" fill="none" stroke="#2f74c8" stroke-width="2" />
<polyline points="1990.4,141.5 1995.95,148.3 2001.5,141.5" fill="none" stroke="#383838" stroke-width="2" stroke-linecap="butt" stroke-linejoin="miter"/>
<circle cx="2067.5" cy="138.5" r="9.5" fill="#f7f7f7" stroke="#333" stroke-width="2.2"/>
<line x1="2061" y1="145.5" x2="2048" y2="158" stroke="#333" stroke-width="2.2" stroke-linecap="butt"/>
<polyline points="2090.3,141.5 2095.8500000000004,148.3 2101.4,141.5" fill="none" stroke="#383838" stroke-width="2" stroke-linecap="butt" stroke-linejoin="miter"/>
<path d="M1965.7,181.9 L1975.6,191.6 L1957.3,210 L1946.9,200.1 Z" fill="#fff" stroke="#8a34b8" stroke-width="2.2" stroke-linejoin="round"/>
<path d="M1954.3,192.9 L1963.9,202.8 L1957.3,210 L1946.9,200.1 Z" fill="#c990e0" stroke="#8a34b8" stroke-width="2.2" stroke-linejoin="round"/>
<polyline points="1990.4,193.5 1995.95,200.3 2001.5,193.5" fill="none" stroke="#383838" stroke-width="2" stroke-linecap="butt" stroke-linejoin="miter"/>
<rect x="2170" y="79" width="53.5" height="53.5" rx="0" fill="#fff" stroke="#c9431f" stroke-width="2.6" />
<rect x="2175.5" y="84.5" width="18.5" height="18.5" rx="0" fill="#fff" stroke="#c9431f" stroke-width="2.4" />
<rect x="2199.5" y="84.5" width="18.5" height="18.5" rx="0" fill="#fff" stroke="#c9431f" stroke-width="2.4" />
<rect x="2175.5" y="108.5" width="18.5" height="18.5" rx="0" fill="#fff" stroke="#c9431f" stroke-width="2.4" />
<rect x="2199.5" y="108.5" width="18.5" height="18.5" rx="0" fill="#fff" stroke="#c9431f" stroke-width="2.4" />
<text x="2155.00" y="168.20" font-size="24.00" fill="#242424" textLength="83.88" lengthAdjust="spacingAndGlyphs" >Add-ins</text>
<path d="M2358.2,127.8 H2343.7 A3.5,3.5 0 0 1 2340.2,124.3 V86.3 A3.5,3.5 0 0 1 2343.7,82.8 H2365.7 L2375.7,92.3 V108.2" fill="none" stroke="#3b6fd8" stroke-width="2.2" stroke-linejoin="round"/><path d="M2347.7,113 C2351.2,109 2356.2,103 2357.2,94 C2357.7,89.5 2355.2,89.5 2355.7,94 C2356.7,101 2362.2,106.5 2368.7,107.6 C2371.2,108 2370.7,105 2368.2,105.3 C2361.2,105.5 2352.2,108 2347.2,112 C2345.7,113.5 2346.7,114.5 2347.7,113 Z" fill="none" stroke="#3b6fd8" stroke-width="1.3" />
<path d="M2370.7,122.7 L2380.7,112.7 A4.6,4.6 0 0 1 2387.3,119.3 L2383,123.6" fill="none" stroke="#3b6fd8" stroke-width="2.3" />
<path d="M2380.3,128.3 L2372.3,136.3 A4.6,4.6 0 0 1 2365.7,129.7 L2369,126.4" fill="none" stroke="#3b6fd8" stroke-width="2.3" />
<text x="2296.77" y="168.20" font-size="24.00" fill="#242424" textLength="119.73" lengthAdjust="spacingAndGlyphs" >Create PDF</text>
<text x="2279.79" y="200.00" font-size="24.00" fill="#242424" textLength="151.67" lengthAdjust="spacingAndGlyphs" >and Share link</text>
<path d="M2544,127.8 H2529.5 A3.5,3.5 0 0 1 2526,124.3 V86.3 A3.5,3.5 0 0 1 2529.5,82.8 H2552 L2562,92.3 V112.1" fill="none" stroke="#3b6fd8" stroke-width="2.2" stroke-linejoin="round"/><path d="M2533.5,113 C2537,109 2542,103 2543,94 C2543.5,89.5 2541,89.5 2541.5,94 C2542.5,101 2548,106.5 2554.5,107.6 C2557,108 2556.5,105 2554,105.3 C2547,105.5 2538,108 2533,112 C2531.5,113.5 2532.5,114.5 2533.5,113 Z" fill="none" stroke="#3b6fd8" stroke-width="1.3" />
<rect x="2547" y="116" width="27" height="19.80000000000001" rx="3.5" fill="#fff" stroke="#3b6fd8" stroke-width="2.3" />
<path d="M2548.5,118.5 L2560.5,128.6 L2572.5,118.5" fill="none" stroke="#3b6fd8" stroke-width="2.2" stroke-linejoin="round"/>
<text x="2459.85" y="168.20" font-size="24.00" fill="#242424" textLength="166.61" lengthAdjust="spacingAndGlyphs" >Create PDF and</text>
<text x="2446.72" y="200.00" font-size="24.00" fill="#242424" textLength="190.90" lengthAdjust="spacingAndGlyphs" >Share via Outlook</text>
<rect x="2699.5" y="74.5" width="62.5" height="62.5" rx="0" fill="#fff" stroke="#6a6a6a" stroke-width="1" />
<line x1="2757.5" y1="75" x2="2757.5" y2="136.5" stroke="#e4e4e4" stroke-width="1" stroke-linecap="butt"/>
<line x1="2700" y1="128.5" x2="2761.5" y2="128.5" stroke="#e4e4e4" stroke-width="1" stroke-linecap="butt"/>
<text x="2703.43" y="88.60" font-size="12.50" fill="#333" textLength="36.25" lengthAdjust="spacingAndGlyphs" >MSFT</text>
<rect x="2701.5" y="92.5" width="55.0" height="18.5" rx="0" fill="#fff" stroke="#4aa552" stroke-width="1.3" />
<text x="2708.71" y="106.40" font-size="13.00" fill="#3a9a45" textLength="4.91" lengthAdjust="spacingAndGlyphs" >$</text>
<text x="2722.72" y="106.40" font-size="13.00" fill="#3a9a45" textLength="31.63" lengthAdjust="spacingAndGlyphs" >47.24</text>
<polygon points="2703,122.5 2709.5,116 2716,122.5" fill="#4caf50"/>
<text x="2722.57" y="123.00" font-size="12.00" fill="#333" textLength="32.41" lengthAdjust="spacingAndGlyphs" >0.26%</text>
<text x="2691.61" y="168.20" font-size="24.00" fill="#242424" textLength="77.38" lengthAdjust="spacingAndGlyphs" >Launch</text>
<rect x="16.5" y="277.5" width="200.5" height="41.5" rx="8" fill="#fff" stroke="#dcdcdc" stroke-width="1" />
<text x="21.81" y="307.30" font-size="25.60" fill="#242424" textLength="46.48" lengthAdjust="spacingAndGlyphs" >P12</text>
<polyline points="188,294.5 197.0,305.5 206,294.5" fill="none" stroke="#242424" stroke-width="2.2" stroke-linecap="round" stroke-linejoin="round"/>
<rect x="236.3" y="288.3" width="4.0" height="4.199999999999989" rx="0" fill="#3a3a3a" stroke="none" stroke-width="1" />
<rect x="236.3" y="296.7" width="4.0" height="4.199999999999989" rx="0" fill="#3a3a3a" stroke="none" stroke-width="1" />
<rect x="236.3" y="303.8" width="4.0" height="4.199999999999989" rx="0" fill="#3a3a3a" stroke="none" stroke-width="1" />
<rect x="258.6" y="277.5" width="168.39999999999998" height="41.5" rx="8" fill="#fff" stroke="#dcdcdc" stroke-width="1" />
<line x1="271.5" y1="287" x2="294.5" y2="309" stroke="#a6a6a6" stroke-width="2" stroke-linecap="butt"/>
<line x1="294.5" y1="287" x2="271.5" y2="309" stroke="#a6a6a6" stroke-width="2" stroke-linecap="butt"/>
<polyline points="315,296.5 325.5,307 346.5,287" fill="none" stroke="#a6a6a6" stroke-width="2"/>
<path d="M388,287 C387,283.5 383.5,283 381.5,285.5 C380,287.5 379.5,290 379,292.5 L375.5,307 C374.5,310.5 372.5,312.5 369.5,312.5 C367,312.5 365.5,311 366,309.5" fill="none" stroke="#333" stroke-width="2.3" stroke-linecap="round"/><path d="M372.3,290.6 H381.5" stroke="#333" stroke-width="2.2"/><path d="M380.8,297.8 C382.3,296 384.3,296.5 385.3,299 L388.1,305.5 C389.1,307.8 390.8,307.8 392.3,306.5 M393.3,297.5 C391.5,296.5 390,297.5 388.5,299.5 L384,305 C382.5,307 381,307.5 380.2,306.5" fill="none" stroke="#333" stroke-width="2.2" stroke-linecap="round"/>
<polyline points="404,294.5 413.5,304.5 423,294.5" fill="none" stroke="#a6a6a6" stroke-width="2" stroke-linecap="round" stroke-linejoin="round"/>
<rect x="437" y="277.5" width="2425" height="79.5" rx="8" fill="#fff" stroke="#dcdcdc" stroke-width="1" />
<polyline points="2836,300.4 2845.25,290 2854.5,300.4" fill="none" stroke="#242424" stroke-width="2" stroke-linecap="round" stroke-linejoin="round"/>
<rect x="54" y="409.5" width="2088" height="1086.5" rx="0" fill="#ffffff" stroke="none" stroke-width="1" />
<line x1="54" y1="409.5" x2="2142" y2="409.5" stroke="#b4b4b4" stroke-width="1" stroke-linecap="butt"/>
<line x1="53.5" y1="409" x2="53.5" y2="1496" stroke="#c4c4c4" stroke-width="1" stroke-linecap="butt"/>
<line x1="2142.5" y1="409" x2="2142.5" y2="1496" stroke="#e2e2e2" stroke-width="1" stroke-linecap="butt"/>
<polygon points="50,376 50,405 21.5,405" fill="#d9d9d9"/>
<line x1="89.5" y1="378" x2="89.5" y2="409" stroke="#d6d6d6" stroke-width="1" stroke-linecap="butt"/>
<text x="63.35" y="400.50" font-size="24.50" fill="#404040" >A</text>
<line x1="224.5" y1="378" x2="224.5" y2="409" stroke="#d6d6d6" stroke-width="1" stroke-linecap="butt"/>
<text x="147.99" y="400.50" font-size="24.50" fill="#404040" >B</text>
<line x1="359.5" y1="378" x2="359.5" y2="409" stroke="#d6d6d6" stroke-width="1" stroke-linecap="butt"/>
<text x="282.50" y="400.50" font-size="24.50" fill="#404040" >C</text>
<line x1="494.5" y1="378" x2="494.5" y2="409" stroke="#d6d6d6" stroke-width="1" stroke-linecap="butt"/>
<text x="417.25" y="400.50" font-size="24.50" fill="#404040" >D</text>
<line x1="629.5" y1="378" x2="629.5" y2="409" stroke="#d6d6d6" stroke-width="1" stroke-linecap="butt"/>
<text x="552.86" y="400.50" font-size="24.50" fill="#404040" >E</text>
<line x1="764.5" y1="378" x2="764.5" y2="409" stroke="#d6d6d6" stroke-width="1" stroke-linecap="butt"/>
<text x="688.51" y="400.50" font-size="24.50" fill="#404040" >F</text>
<line x1="1196.5" y1="378" x2="1196.5" y2="409" stroke="#d6d6d6" stroke-width="1" stroke-linecap="butt"/>
<text x="970.75" y="400.50" font-size="24.50" fill="#404040" >G</text>
<line x1="1234.5" y1="378" x2="1234.5" y2="409" stroke="#d6d6d6" stroke-width="1" stroke-linecap="butt"/>
<text x="1206.15" y="400.50" font-size="24.50" fill="#404040" >H</text>
<line x1="1369.5" y1="378" x2="1369.5" y2="409" stroke="#d6d6d6" stroke-width="1" stroke-linecap="butt"/>
<text x="1298.10" y="400.50" font-size="24.50" fill="#404040" >I</text>
<line x1="1504.5" y1="378" x2="1504.5" y2="409" stroke="#d6d6d6" stroke-width="1" stroke-linecap="butt"/>
<text x="1431.08" y="400.50" font-size="24.50" fill="#404040" >J</text>
<line x1="1639.5" y1="378" x2="1639.5" y2="409" stroke="#d6d6d6" stroke-width="1" stroke-linecap="butt"/>
<text x="1562.47" y="400.50" font-size="24.50" fill="#404040" >K</text>
<line x1="1774.5" y1="378" x2="1774.5" y2="409" stroke="#d6d6d6" stroke-width="1" stroke-linecap="butt"/>
<text x="1699.09" y="400.50" font-size="24.50" fill="#404040" >L</text>
<line x1="1909.5" y1="378" x2="1909.5" y2="409" stroke="#d6d6d6" stroke-width="1" stroke-linecap="butt"/>
<text x="1831.30" y="400.50" font-size="24.50" fill="#404040" >M</text>
<line x1="2044.5" y1="378" x2="2044.5" y2="409" stroke="#d6d6d6" stroke-width="1" stroke-linecap="butt"/>
<text x="1967.65" y="400.50" font-size="24.50" fill="#404040" >N</text>
<text x="2102.01" y="400.50" font-size="24.50" fill="#404040" >O</text>
<line x1="8" y1="447.5" x2="53" y2="447.5" stroke="#d9d9d9" stroke-width="1" stroke-linecap="butt"/>
<text x="19.36" y="438.70" font-size="24.50" fill="#404040" >1</text>
<line x1="8" y1="485.5" x2="53" y2="485.5" stroke="#d9d9d9" stroke-width="1" stroke-linecap="butt"/>
<text x="19.67" y="476.70" font-size="24.50" fill="#404040" >2</text>
<line x1="8" y1="523.5" x2="53" y2="523.5" stroke="#d9d9d9" stroke-width="1" stroke-linecap="butt"/>
<text x="19.76" y="514.70" font-size="24.50" fill="#404040" >3</text>
<line x1="8" y1="561.5" x2="53" y2="561.5" stroke="#d9d9d9" stroke-width="1" stroke-linecap="butt"/>
<text x="19.76" y="552.70" font-size="24.50" fill="#404040" >4</text>
<line x1="8" y1="599.5" x2="53" y2="599.5" stroke="#d9d9d9" stroke-width="1" stroke-linecap="butt"/>
<text x="19.70" y="590.70" font-size="24.50" fill="#404040" >5</text>
<line x1="8" y1="637.5" x2="53" y2="637.5" stroke="#d9d9d9" stroke-width="1" stroke-linecap="butt"/>
<text x="19.61" y="628.70" font-size="24.50" fill="#404040" >6</text>
<line x1="8" y1="675.5" x2="53" y2="675.5" stroke="#d9d9d9" stroke-width="1" stroke-linecap="butt"/>
<text x="19.67" y="666.70" font-size="24.50" fill="#404040" >7</text>
<line x1="8" y1="713.5" x2="53" y2="713.5" stroke="#d9d9d9" stroke-width="1" stroke-linecap="butt"/>
<text x="19.67" y="704.70" font-size="24.50" fill="#404040" >8</text>
<line x1="8" y1="751.5" x2="53" y2="751.5" stroke="#d9d9d9" stroke-width="1" stroke-linecap="butt"/>
<text x="19.70" y="742.70" font-size="24.50" fill="#404040" >9</text>
<line x1="8" y1="789.5" x2="53" y2="789.5" stroke="#d9d9d9" stroke-width="1" stroke-linecap="butt"/>
<text x="12.44" y="780.70" font-size="24.50" fill="#404040" >10</text>
<line x1="8" y1="827.5" x2="53" y2="827.5" stroke="#d9d9d9" stroke-width="1" stroke-linecap="butt"/>
<text x="13.45" y="818.70" font-size="24.50" fill="#404040" >11</text>
<line x1="8" y1="865.5" x2="53" y2="865.5" stroke="#d9d9d9" stroke-width="1" stroke-linecap="butt"/>
<text x="12.57" y="856.70" font-size="24.50" fill="#404040" >12</text>
<line x1="8" y1="903.5" x2="53" y2="903.5" stroke="#d9d9d9" stroke-width="1" stroke-linecap="butt"/>
<text x="12.50" y="894.70" font-size="24.50" fill="#404040" >13</text>
<line x1="8" y1="941.5" x2="53" y2="941.5" stroke="#d9d9d9" stroke-width="1" stroke-linecap="butt"/>
<text x="12.32" y="932.70" font-size="24.50" fill="#404040" >14</text>
<line x1="8" y1="979.5" x2="53" y2="979.5" stroke="#d9d9d9" stroke-width="1" stroke-linecap="butt"/>
<text x="12.47" y="970.70" font-size="24.50" fill="#404040" >15</text>
<line x1="8" y1="1017.5" x2="53" y2="1017.5" stroke="#d9d9d9" stroke-width="1" stroke-linecap="butt"/>
<text x="12.50" y="1008.70" font-size="24.50" fill="#404040" >16</text>
<line x1="8" y1="1055.5" x2="53" y2="1055.5" stroke="#d9d9d9" stroke-width="1" stroke-linecap="butt"/>
<text x="12.57" y="1046.70" font-size="24.50" fill="#404040" >17</text>
<line x1="8" y1="1093.5" x2="53" y2="1093.5" stroke="#d9d9d9" stroke-width="1" stroke-linecap="butt"/>
<text x="12.47" y="1084.70" font-size="24.50" fill="#404040" >18</text>
<line x1="8" y1="1131.5" x2="53" y2="1131.5" stroke="#d9d9d9" stroke-width="1" stroke-linecap="butt"/>
<text x="12.54" y="1122.70" font-size="24.50" fill="#404040" >19</text>
<line x1="8" y1="1169.5" x2="53" y2="1169.5" stroke="#d9d9d9" stroke-width="1" stroke-linecap="butt"/>
<text x="12.75" y="1160.70" font-size="24.50" fill="#404040" >20</text>
<line x1="8" y1="1207.5" x2="53" y2="1207.5" stroke="#d9d9d9" stroke-width="1" stroke-linecap="butt"/>
<text x="12.87" y="1198.70" font-size="24.50" fill="#404040" >21</text>
<line x1="8" y1="1245.5" x2="53" y2="1245.5" stroke="#d9d9d9" stroke-width="1" stroke-linecap="butt"/>
<text x="12.87" y="1236.70" font-size="24.50" fill="#404040" >22</text>
<line x1="8" y1="1283.5" x2="53" y2="1283.5" stroke="#d9d9d9" stroke-width="1" stroke-linecap="butt"/>
<text x="12.81" y="1274.70" font-size="24.50" fill="#404040" >23</text>
<line x1="8" y1="1321.5" x2="53" y2="1321.5" stroke="#d9d9d9" stroke-width="1" stroke-linecap="butt"/>
<text x="12.63" y="1312.70" font-size="24.50" fill="#404040" >24</text>
<line x1="8" y1="1359.5" x2="53" y2="1359.5" stroke="#d9d9d9" stroke-width="1" stroke-linecap="butt"/>
<text x="12.78" y="1350.70" font-size="24.50" fill="#404040" >25</text>
<line x1="8" y1="1397.5" x2="53" y2="1397.5" stroke="#d9d9d9" stroke-width="1" stroke-linecap="butt"/>
<text x="12.81" y="1388.70" font-size="24.50" fill="#404040" >26</text>
<line x1="8" y1="1435.5" x2="53" y2="1435.5" stroke="#d9d9d9" stroke-width="1" stroke-linecap="butt"/>
<text x="12.87" y="1426.70" font-size="24.50" fill="#404040" >27</text>
<line x1="8" y1="1473.5" x2="53" y2="1473.5" stroke="#d9d9d9" stroke-width="1" stroke-linecap="butt"/>
<text x="12.78" y="1464.70" font-size="24.50" fill="#404040" >28</text>
<line x1="8" y1="1511.5" x2="53" y2="1511.5" stroke="#d9d9d9" stroke-width="1" stroke-linecap="butt"/>
<text x="12.84" y="1502.70" font-size="24.50" fill="#404040" >29</text>
<path d="M2142.5,1496 V380 Q2142.5,372 2150.5,372 H2172.5 Q2180.5,372 2180.5,380 V1496 Z" fill="#f3f3f3"/>
<line x1="2180.5" y1="372" x2="2180.5" y2="1496" stroke="#dedede" stroke-width="1" stroke-linecap="butt"/>
<path d="M2153,395.5 L2161,382.5 L2169,395.5 Z" fill="#707070" stroke="#707070" stroke-width="2" stroke-linejoin="round"/>
<rect x="2153" y="406" width="16" height="773.5" rx="8" fill="#707070" stroke="none" stroke-width="1" />
<path d="M2153,1479.5 L2169,1479.5 L2161,1492 Z" fill="#707070" stroke="#707070" stroke-width="2" stroke-linejoin="round"/>
<rect x="89.5" y="447.5" width="540.0" height="75.5" rx="0" fill="#21422e" stroke="#000" stroke-width="1.2" />
<text x="92.95" y="476.50" font-size="26.60" fill="#fff" textLength="87.10" lengthAdjust="spacingAndGlyphs" >Ex0014</text>
<text x="94.93" y="515.00" font-size="26.60" fill="#fff" textLength="493.62" lengthAdjust="spacingAndGlyphs" >Weighted Average Cost of Capital (WACC)</text>
<text x="94.43" y="552.50" font-size="26.60" fill="#000" textLength="455.70" lengthAdjust="spacingAndGlyphs" >Waypoint Engineering is a business-to-</text>
<text x="92.83" y="590.50" font-size="26.60" fill="#000" textLength="492.77" lengthAdjust="spacingAndGlyphs" >business (B2B) manufacturer of telemetry</text>
<text x="93.40" y="628.50" font-size="26.60" fill="#000" textLength="474.36" lengthAdjust="spacingAndGlyphs" >and GPS systems for overlanding vehicle</text>
<text x="92.78" y="666.50" font-size="26.60" fill="#000" textLength="495.39" lengthAdjust="spacingAndGlyphs" >makers and other end markets. They have</text>
<text x="93.77" y="704.50" font-size="26.60" fill="#000" textLength="466.36" lengthAdjust="spacingAndGlyphs" >several tranches of debt and equity and</text>
<text x="94.57" y="742.50" font-size="26.60" fill="#000" textLength="489.95" lengthAdjust="spacingAndGlyphs" >want to calculate their WACC for the past</text>
<text x="94.11" y="780.50" font-size="26.60" fill="#000" textLength="457.24" lengthAdjust="spacingAndGlyphs" >three years so they can perform a DCF.</text>
<text x="94.43" y="856.50" font-size="26.60" fill="#000" textLength="446.85" lengthAdjust="spacingAndGlyphs" >WACC = (Re * We) + (Rd * Wd)*(1 - T)</text>
<text x="93.96" y="932.50" font-size="26.60" fill="#000" textLength="481.28" lengthAdjust="spacingAndGlyphs" >Your first step, as Waypoint's investment</text>
<text x="92.83" y="970.50" font-size="26.60" fill="#000" textLength="528.61" lengthAdjust="spacingAndGlyphs" >banker, is to find the weighted average costs</text>
<text x="93.39" y="1008.50" font-size="26.60" fill="#000" textLength="436.85" lengthAdjust="spacingAndGlyphs" >of equity and debt from the different</text>
<text x="94.10" y="1046.50" font-size="26.60" fill="#000" textLength="463.53" lengthAdjust="spacingAndGlyphs" >tranches. Then, you can find the overall</text>
<text x="94.57" y="1084.50" font-size="26.60" fill="#000" textLength="458.95" lengthAdjust="spacingAndGlyphs" >weighted average cost of capital which</text>
<text x="93.35" y="1122.50" font-size="26.60" fill="#000" textLength="375.69" lengthAdjust="spacingAndGlyphs" >combines both debt and equity.</text>
<text x="92.41" y="1198.50" font-size="26.60" fill="#000" textLength="497.83" lengthAdjust="spacingAndGlyphs" >NOTE: The London Interbank Offered Rate</text>
<text x="93.38" y="1236.50" font-size="26.60" fill="#000" textLength="469.78" lengthAdjust="spacingAndGlyphs" >ceased in 2024 and was replaced by the</text>
<text x="93.36" y="1274.50" font-size="26.60" fill="#000" textLength="491.01" lengthAdjust="spacingAndGlyphs" >Secured Overnight Financing Rate (SOFR).</text>
<rect x="1234" y="903.5" width="405" height="37.5" rx="0" fill="#e3e3e3" stroke="none" stroke-width="1" />
<rect x="1234" y="1169.5" width="405" height="37.5" rx="0" fill="#e3e3e3" stroke="none" stroke-width="1" />
<rect x="1234" y="1245" width="405" height="152" rx="0" fill="#e3e3e3" stroke="none" stroke-width="1" />
<rect x="1234" y="1435.5" width="405" height="37.5" rx="0" fill="#dde6f2" stroke="none" stroke-width="1" />
<rect x="764.5" y="523.5" width="875.0" height="37.0" rx="0" fill="none" stroke="#000" stroke-width="1.2" />
<line x1="764" y1="903.5" x2="1640" y2="903.5" stroke="#000" stroke-width="1.2" stroke-linecap="butt"/>
<line x1="764" y1="1169.5" x2="1640" y2="1169.5" stroke="#000" stroke-width="1.2" stroke-linecap="butt"/>
<rect x="764.5" y="1435.5" width="875.0" height="37.0" rx="0" fill="none" stroke="#000" stroke-width="1.2" />
<text x="767.45" y="552.50" font-size="26.60" fill="#000" textLength="77.86" lengthAdjust="spacingAndGlyphs" >Period</text>
<text x="768.05" y="628.50" font-size="26.60" fill="#000" textLength="165.89" lengthAdjust="spacingAndGlyphs" >($ Thousands)</text>
<text x="767.41" y="666.50" font-size="26.60" fill="#000" textLength="112.68" lengthAdjust="spacingAndGlyphs" >Liabilities</text>
<text x="788.98" y="704.50" font-size="26.60" fill="#000" textLength="342.84" lengthAdjust="spacingAndGlyphs" >5-Year Note (SOFR + 200bps)</text>
<text x="810.62" y="742.50" font-size="26.60" font-style="italic" fill="#000" textLength="55.16" lengthAdjust="spacingAndGlyphs" >Rate</text>
<text x="788.01" y="780.50" font-size="26.60" fill="#000" textLength="161.19" lengthAdjust="spacingAndGlyphs" >10-Year Bond</text>
<text x="810.62" y="818.50" font-size="26.60" font-style="italic" fill="#000" textLength="55.16" lengthAdjust="spacingAndGlyphs" >Rate</text>
<text x="789.93" y="856.50" font-size="26.60" fill="#000" textLength="297.50" lengthAdjust="spacingAndGlyphs" >Working Capital Revolver</text>
<text x="810.62" y="894.50" font-size="26.60" font-style="italic" fill="#000" textLength="55.16" lengthAdjust="spacingAndGlyphs" >Rate</text>
<text x="769.05" y="932.50" font-size="26.60" fill="#000" textLength="123.19" lengthAdjust="spacingAndGlyphs" >Total Debt</text>
<text x="768.42" y="1008.50" font-size="26.60" fill="#000" textLength="237.16" lengthAdjust="spacingAndGlyphs" >Stockholders' Equity</text>
<text x="788.68" y="1046.50" font-size="26.60" fill="#000" textLength="187.79" lengthAdjust="spacingAndGlyphs" >Common Equity</text>
<text x="810.62" y="1084.50" font-size="26.60" font-style="italic" fill="#000" textLength="55.16" lengthAdjust="spacingAndGlyphs" >Rate</text>
<text x="787.85" y="1122.50" font-size="26.60" fill="#000" textLength="193.87" lengthAdjust="spacingAndGlyphs" >Preferred Equity</text>
<text x="810.62" y="1160.50" font-size="26.60" font-style="italic" fill="#000" textLength="55.16" lengthAdjust="spacingAndGlyphs" >Rate</text>
<text x="769.06" y="1198.50" font-size="26.60" fill="#000" textLength="140.53" lengthAdjust="spacingAndGlyphs" >Total Equity</text>
<text x="768.29" y="1274.50" font-size="26.60" fill="#000" textLength="163.52" lengthAdjust="spacingAndGlyphs" >Cost of Equity</text>
<text x="769.53" y="1312.50" font-size="26.60" fill="#000" textLength="197.29" lengthAdjust="spacingAndGlyphs" >Weight of Equity</text>
<text x="768.29" y="1350.50" font-size="26.60" fill="#000" textLength="145.76" lengthAdjust="spacingAndGlyphs" >Cost of Debt</text>
<text x="769.53" y="1388.50" font-size="26.60" fill="#000" textLength="179.54" lengthAdjust="spacingAndGlyphs" >Weight of Debt</text>
<text x="769.08" y="1426.50" font-size="26.60" fill="#000" textLength="102.46" lengthAdjust="spacingAndGlyphs" >Tax Rate</text>
<text x="769.60" y="1464.50" font-size="26.60" font-weight="bold" fill="#000" textLength="407.91" lengthAdjust="spacingAndGlyphs" >Weighted Average Cost of Capital</text>
<text x="1349.10" y="552.50" font-size="26.60" fill="#000" >1</text>
<text x="1484.80" y="552.50" font-size="26.60" fill="#000" >2</text>
<text x="1619.67" y="552.50" font-size="26.60" fill="#000" >3</text>
<text x="1289.43" y="704.50" font-size="26.60" fill="#000" >5,000</text>
<text x="1424.43" y="704.50" font-size="26.60" fill="#000" >5,000</text>
<text x="1559.43" y="704.50" font-size="26.60" fill="#000" >5,000</text>
<text x="1299.48" y="742.50" font-size="26.60" font-style="italic" fill="#000" >4.5%</text>
<text x="1434.48" y="742.50" font-size="26.60" font-style="italic" fill="#000" >4.6%</text>
<text x="1569.28" y="742.50" font-size="26.60" font-style="italic" fill="#000" >4.6%</text>
<text x="1289.43" y="780.50" font-size="26.60" fill="#000" >1,000</text>
<text x="1424.43" y="780.50" font-size="26.60" fill="#000" >1,000</text>
<text x="1559.43" y="780.50" font-size="26.60" fill="#000" >1,000</text>
<text x="1299.48" y="818.50" font-size="26.60" font-style="italic" fill="#000" >5.0%</text>
<text x="1434.48" y="818.50" font-size="26.60" font-style="italic" fill="#000" >5.0%</text>
<text x="1569.28" y="818.50" font-size="26.60" font-style="italic" fill="#000" >5.0%</text>
<text x="1311.64" y="856.50" font-size="26.60" fill="#000" >200</text>
<text x="1446.64" y="856.50" font-size="26.60" fill="#000" >150</text>
<text x="1581.64" y="856.50" font-size="26.60" fill="#000" >300</text>
<text x="1299.48" y="894.50" font-size="26.60" font-style="italic" fill="#000" >5.8%</text>
<text x="1434.48" y="894.50" font-size="26.60" font-style="italic" fill="#000" >5.8%</text>
<text x="1569.28" y="894.50" font-size="26.60" font-style="italic" fill="#000" >5.8%</text>
<text x="1274.67" y="1046.50" font-size="26.60" fill="#000" >10,000</text>
<text x="1409.67" y="1046.50" font-size="26.60" fill="#000" >10,000</text>
<text x="1544.67" y="1046.50" font-size="26.60" fill="#000" >10,000</text>
<text x="1284.65" y="1084.50" font-size="26.60" font-style="italic" fill="#000" >10.3%</text>
<text x="1419.65" y="1084.50" font-size="26.60" font-style="italic" fill="#000" >10.3%</text>
<text x="1554.45" y="1084.50" font-size="26.60" font-style="italic" fill="#000" >10.3%</text>
<text x="1289.43" y="1122.50" font-size="26.60" fill="#000" >3,500</text>
<text x="1424.43" y="1122.50" font-size="26.60" fill="#000" >3,500</text>
<text x="1559.43" y="1122.50" font-size="26.60" fill="#000" >4,000</text>
<text x="1299.48" y="1160.50" font-size="26.60" font-style="italic" fill="#000" >9.7%</text>
<text x="1434.48" y="1160.50" font-size="26.60" font-style="italic" fill="#000" >9.7%</text>
<text x="1569.28" y="1160.50" font-size="26.60" font-style="italic" fill="#000" >9.7%</text>
<text x="1288.05" y="1426.50" font-size="26.60" fill="#000" >20.0%</text>
<text x="1423.75" y="1426.50" font-size="26.60" fill="#000" >20.0%</text>
<text x="1558.75" y="1426.50" font-size="26.60" fill="#000" >20.0%</text>
<rect x="2181" y="372" width="697" height="1124" rx="0" fill="#f8f8f8" stroke="none" stroke-width="1" />
<text x="2198.83" y="421.60" font-size="30.00" fill="#242424" textLength="172.60" lengthAdjust="spacingAndGlyphs" >Lingo Trainer</text>
<polyline points="2761,404.5 2774.5,418 2788,404.5" fill="none" stroke="#242424" stroke-width="2.2"/>
<path d="M2830.5,401.5 L2850,420.5 M2850,401.5 L2830.5,420.5" stroke="#242424" stroke-width="2.2"/>
<rect x="2199.5" y="450.5" width="661.0" height="1050.5" rx="0" fill="#fbfbfb" stroke="#cfcfcf" stroke-width="1.2" />
<rect x="2200.5" y="451.5" width="628.5" height="1049.5" rx="0" fill="#151916" stroke="none" stroke-width="1" />
<path d="M2836,475 L2844,462 L2852,475 Z" fill="#8a8a8a" stroke="#8a8a8a" stroke-width="2" stroke-linejoin="round"/>
<rect x="2835" y="487.6" width="18" height="815.8000000000001" rx="9" fill="#8a8a8a" stroke="none" stroke-width="1" />
<text x="2223.68" y="519.20" font-size="29.50" font-weight="bold" fill="#ffffff" textLength="176.91" lengthAdjust="spacingAndGlyphs" >Lingo Trainer</text>
<text x="2406.79" y="519.20" font-size="25.00" font-weight="bold" fill="#d2d2d2" textLength="87.45" lengthAdjust="spacingAndGlyphs" >(Alpha)</text>
<rect x="2733.5" y="476" width="71.0" height="64" rx="17" fill="#1b201c" stroke="#4b7f57" stroke-width="2.2" />
<rect x="2756" y="497.6" width="26.5" height="2.7999999999999545" rx="0" fill="#fff" stroke="none" stroke-width="1" />
<rect x="2756" y="508.6" width="26.5" height="2.7999999999999545" rx="0" fill="#fff" stroke="none" stroke-width="1" />
<rect x="2756" y="519.6" width="26.5" height="2.7999999999999545" rx="0" fill="#fff" stroke="none" stroke-width="1" />
<rect x="2225.5" y="568" width="579.0999999999999" height="453.5" rx="30" fill="#1b1f1c" stroke="#3f6d49" stroke-width="1.8" />
<rect x="2251" y="594" width="162.80000000000018" height="99.39999999999998" rx="30" fill="#78bd89" stroke="none" stroke-width="1" />
<text x="2293.06" y="655.00" font-size="28.60" font-weight="bold" fill="#fff" textLength="78.01" lengthAdjust="spacingAndGlyphs" stroke="#fff" stroke-width="1.3">Start</text>
<rect x="2433.8" y="594" width="162.0999999999999" height="99.39999999999998" rx="30" fill="#b87672" stroke="none" stroke-width="1" />
<text x="2485.59" y="655.00" font-size="28.60" font-weight="bold" fill="#fff" textLength="58.46" lengthAdjust="spacingAndGlyphs" stroke="#fff" stroke-width="1.3">End</text>
<rect x="2615.6" y="594" width="163.20000000000027" height="99.39999999999998" rx="30" fill="#f8eb8e" stroke="#d9cf7c" stroke-width="1.5" />
<text x="2650.24" y="655.00" font-size="28.60" font-weight="bold" fill="#111" textLength="94.43" lengthAdjust="spacingAndGlyphs" stroke="#111" stroke-width="1.3">Check</text>
<rect x="2251" y="715" width="527.8000000000002" height="98.5" rx="30" fill="#1b1f1c" stroke="#3f6d49" stroke-width="1.8" />
<text x="2364.28" y="775.00" font-size="28.60" font-weight="bold" fill="#fff" textLength="300.84" lengthAdjust="spacingAndGlyphs" stroke="#fff" stroke-width="1.3">Load Next Exercise</text>
<text x="2249.26" y="889.20" font-size="26.50" font-weight="bold" fill="#fff" textLength="225.08" lengthAdjust="spacingAndGlyphs" >Elapsed: 00:00.00</text>
<text x="2249.00" y="932.90" font-size="26.00" fill="#d4d4d4" textLength="315.19" lengthAdjust="spacingAndGlyphs" >Passed/Completed: 000/001</text>
<text x="2710.44" y="887.00" font-size="25.00" font-weight="bold" fill="#e2e2e2" textLength="69.14" lengthAdjust="spacingAndGlyphs" >Grade</text>
<text x="2738.14" y="922.90" font-size="28.00" font-weight="bold" fill="#fff" textLength="41.36" lengthAdjust="spacingAndGlyphs" >NA</text>
<rect x="2225.2" y="1043" width="579.4000000000001" height="198.20000000000005" rx="30" fill="#1b1f1c" stroke="#3f6d49" stroke-width="1.8" />
<text x="2249.74" y="1093.30" font-size="25.00" font-weight="bold" fill="#e6e6e6" textLength="62.56" lengthAdjust="spacingAndGlyphs" >Mode</text>
<rect x="2249.3" y="1114.3" width="256.2999999999997" height="103.90000000000009" rx="32" fill="none" stroke="#172019" stroke-width="6" />
<rect x="2251.3" y="1116.3" width="252.29999999999973" height="99.90000000000009" rx="30" fill="#1a1e1b" stroke="#25342a" stroke-width="2.5" />
<text x="2317.88" y="1177.90" font-size="28.60" font-weight="bold" fill="#fff" textLength="119.60" lengthAdjust="spacingAndGlyphs" stroke="#fff" stroke-width="1.3">Explore</text>
<rect x="2525.2" y="1116.3" width="253.30000000000018" height="99.90000000000009" rx="30" fill="#1b1f1c" stroke="#3f6d49" stroke-width="1.8" />
<text x="2584.26" y="1177.90" font-size="28.60" font-weight="bold" fill="#fff" textLength="135.44" lengthAdjust="spacingAndGlyphs" stroke="#fff" stroke-width="1.3">Evaluate</text>
<rect x="2225.2" y="1262.4" width="579.4000000000001" height="240.5999999999999" rx="30" fill="#1b1f1c" stroke="#3f6d49" stroke-width="1.8" />
<text x="2249.74" y="1313.60" font-size="25.00" font-weight="bold" fill="#e6e6e6" textLength="269.22" lengthAdjust="spacingAndGlyphs" >Difficulty for Evaluation</text>
<rect x="2249.3" y="1334.2" width="160.5999999999999" height="104.20000000000005" rx="32" fill="none" stroke="#172019" stroke-width="6" />
<rect x="2251.3" y="1336.2" width="156.5999999999999" height="100.20000000000005" rx="30" fill="#1a1e1b" stroke="#25342a" stroke-width="2.5" />
<text x="2291.91" y="1397.00" font-size="28.60" font-weight="bold" fill="#fff" textLength="74.98" lengthAdjust="spacingAndGlyphs" stroke="#fff" stroke-width="1.3">Easy</text>
<rect x="2429.5" y="1336.2" width="170.80000000000018" height="100.20000000000005" rx="30" fill="#1b1f1c" stroke="#3f6d49" stroke-width="1.8" />
<text x="2453.90" y="1397.00" font-size="28.60" font-weight="bold" fill="#fff" textLength="122.26" lengthAdjust="spacingAndGlyphs" stroke="#fff" stroke-width="1.3">Medium</text>
<rect x="2621.2" y="1336.2" width="157.30000000000018" height="100.20000000000005" rx="30" fill="#1b1f1c" stroke="#3f6d49" stroke-width="1.8" />
<text x="2661.41" y="1397.00" font-size="28.60" font-weight="bold" fill="#fff" textLength="76.81" lengthAdjust="spacingAndGlyphs" stroke="#fff" stroke-width="1.3">Hard</text>
<text x="2251.30" y="1477.10" font-size="26.00" fill="#d8d8d8" textLength="203.52" lengthAdjust="spacingAndGlyphs" >Allowable errors: 5</text>

</svg></body></html>
